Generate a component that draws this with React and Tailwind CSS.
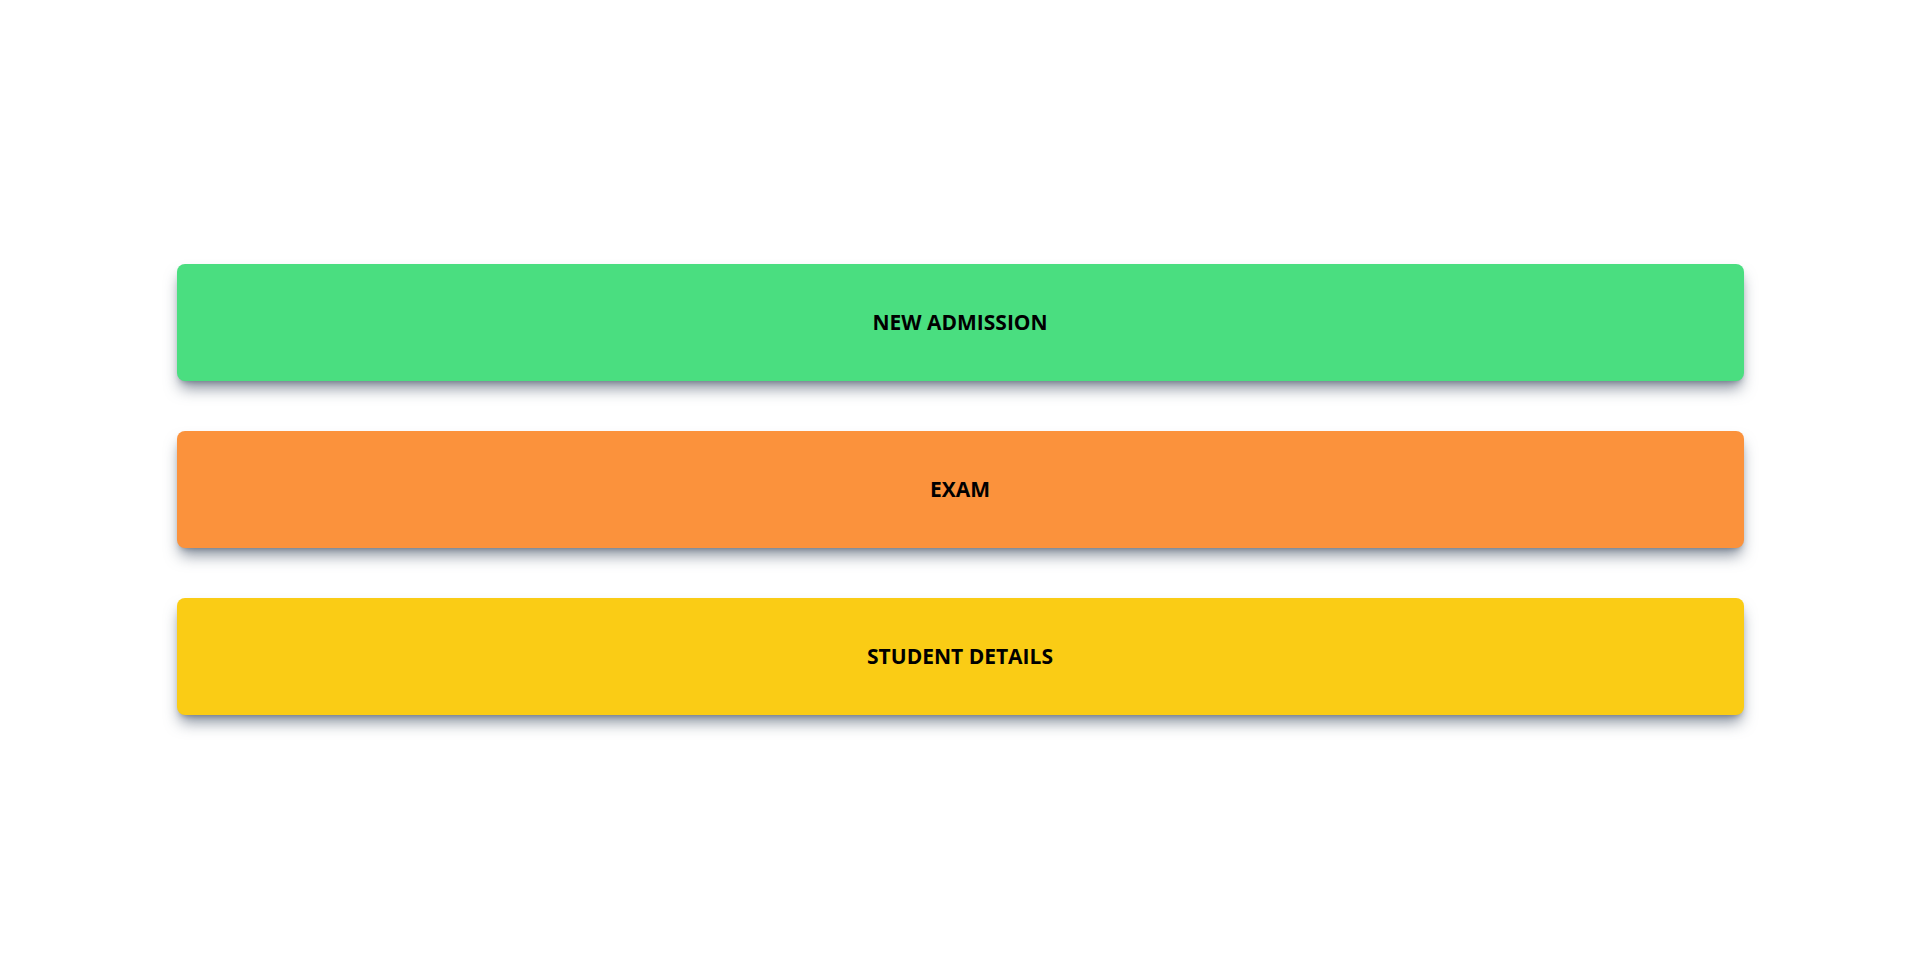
import React from "react";

const items = [
  { label: "NEW ADMISSION", color: "bg-[#4ade80]" },
  { label: "EXAM", color: "bg-[#fb923c]" },
  { label: "STUDENT DETAILS", color: "bg-[#facc15]" },
];

const App = () => {
  return (
    <div
      className="min-h-screen bg-white flex flex-col items-center pt-[264px] gap-[50px]"
      style={{ fontFamily: '"Open Sans", sans-serif' }}
    >
      {items.map((item) => (
        <button
          key={item.label}
          className={`${item.color} w-[1567px] h-[117px] rounded-lg shadow-[0_10px_15px_-3px_rgba(71,85,105,0.65),0_4px_6px_-4px_rgba(71,85,105,0.65)] text-[21px] font-bold text-black flex items-center justify-center`}
        >
          {item.label}
        </button>
      ))}
    </div>
  );
};

export default App;
